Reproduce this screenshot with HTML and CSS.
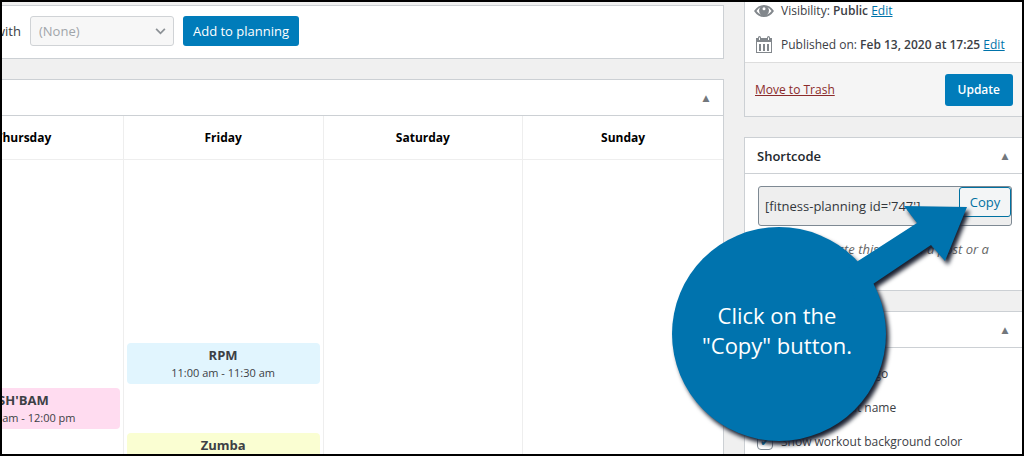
FILE: index.html
```
<!DOCTYPE html>
<html lang="en">

<head>
    <meta charset="utf-8">
    <meta name="viewport" content="width=device-width, initial-scale=1.0">
    <title>Edit planning</title>
    <link rel="stylesheet" href="styles.css">
</head>

<body>
    <main class="content">
        <section class="box add-workout">
            <label for="coach">with</label>
            <div class="select-wrap">
                <select id="coach" disabled>
                    <option>(None)</option>
                </select>
                <svg class="chevron" viewBox="0 0 12 8" aria-hidden="true"><path d="M1 1l5 5 5-5" /></svg>
            </div>
            <button type="button" class="button-primary">Add to planning</button>
        </section>

        <section class="box planning">
            <div class="box-header">
                <h2></h2>
                <button type="button" class="toggle" aria-label="Toggle planning">▲</button>
            </div>
            <table>
                <thead>
                    <tr>
                        <th>Thursday</th>
                        <th>Friday</th>
                        <th>Saturday</th>
                        <th>Sunday</th>
                    </tr>
                </thead>
                <tbody>
                    <tr><td></td><td></td><td></td><td></td></tr>
                    <tr><td></td><td></td><td></td><td></td></tr>
                    <tr><td></td><td></td><td></td><td></td></tr>
                    <tr><td></td><td></td><td></td><td></td></tr>
                    <tr>
                        <td></td>
                        <td><div class="workout blue"><b>RPM</b><span>11:00 am - 11:30 am</span></div></td>
                        <td></td>
                        <td></td>
                    </tr>
                    <tr>
                        <td><div class="workout pink"><b>SH'BAM</b><span>11:30 am - 12:00 pm</span></div></td>
                        <td></td>
                        <td></td>
                        <td></td>
                    </tr>
                    <tr>
                        <td></td>
                        <td><div class="workout yellow"><b>Zumba</b></div></td>
                        <td></td>
                        <td></td>
                    </tr>
                </tbody>
            </table>
        </section>
    </main>

    <aside class="sidebar">
        <section class="box publish">
            <p class="publish-row">
                <svg viewBox="0 0 20 20" aria-hidden="true">
                    <path fill-rule="evenodd" d="M0 10Q4 4 10 4T20 10Q16 16 10 16T0 10ZM2.500 10Q4.500 12.800 7 13.800Q5 12 5 9.500Q5 7.600 6.500 6.200Q4.200 7.500 2.500 10ZM17.500 10Q15.500 12.800 13 13.800Q15 12 15 9.500Q15 7.600 13.500 6.200Q15.800 7.500 17.500 10ZM10 6.200A1.500 1.500 0 0 0 10 9.200A1.500 1.500 0 0 0 10 6.200Z" />
                </svg>
                <span>Visibility: <b>Public</b> <a href="#">Edit</a></span>
            </p>
            <p class="publish-row">
                <svg viewBox="0 0 20 20" aria-hidden="true">
                    <path fill-rule="evenodd" d="M2 3H4V2.500Q4 1 5.500 1T7 2.500V3H13V2.500Q13 1 14.500 1T16 2.500V3H18V18H2ZM3 7V17H17V7ZM5 2.500V5H6V2.500ZM14 2.500V5H15V2.500Z" />
                    <path d="M5 9H7V16H5ZM9 9H11V16H9ZM13 9H15V16H13Z" />
                </svg>
                <span>Published on: <b>Feb 13, 2020 at 17:25</b> <a href="#">Edit</a></span>
            </p>
            <div class="publish-actions">
                <a class="trash" href="#">Move to Trash</a>
                <button type="button" class="button-primary">Update</button>
            </div>
        </section>

        <section class="box shortcode">
            <div class="box-header">
                <h2>Shortcode</h2>
                <button type="button" class="toggle" aria-label="Toggle shortcode">▲</button>
            </div>
            <div class="shortcode-body">
                <div class="shortcode-field">
                    <input type="text" value="[fitness-planning id='747']" aria-label="Shortcode" readonly>
                    <button type="button" class="copy">Copy</button>
                </div>
                <p>Copy and paste this code in a post or a page</p>
            </div>
        </section>

        <section class="box settings">
            <div class="box-header">
                <h2></h2>
                <button type="button" class="toggle" aria-label="Toggle settings">▲</button>
            </div>
            <div class="settings-body">
                <label><input type="checkbox" checked>Show workout logo</label>
                <label><input type="checkbox" checked>Show workout name</label>
                <label><input type="checkbox" checked>Show workout background color</label>
            </div>
        </section>
    </aside>

    <div class="callout">
        <svg viewBox="0 0 310 250" aria-hidden="true">
            <circle cx="114" cy="134" r="107" />
            <path d="M180 70L193 61L252 23L239 6L302 7L280 61L266 45L208 84L190 100Z" />
        </svg>
        <p>Click on the<br>"Copy" button.</p>
    </div>
</body>

</html>
```
FILE: styles.css
```
* {
    box-sizing: border-box;
}

body {
    display: grid;
    grid-template-columns: 1fr 278px;
    gap: 20px;
    height: 100vh;
    margin: 0;
    border: 2px solid #000;
    overflow: hidden;
    position: relative;
    background-color: #f0f0f0;
    color: #3c4045;
    font-family: "Open Sans", "Noto Sans", sans-serif;
    font-size: 12px;
    line-height: 18px;
}

h2,
p {
    margin: 0;
}

b {
    font-weight: 600;
}

a {
    color: #0073aa;
}

button,
input,
select {
    font-family: inherit;
    font-size: inherit;
}

.content,
.sidebar {
    display: flex;
    flex-direction: column;
    gap: 20px;
    min-width: 0;
    min-height: 0;
}

.content {
    overflow: hidden;
}

.box {
    flex-shrink: 0;
    background-color: #fff;
    border: 1px solid #ccd0d4;
}

.content .box {
    border-left: none;
}

.sidebar .box {
    border-right: none;
}

.box-header {
    display: flex;
    align-items: center;
    justify-content: space-between;
    height: 36px;
    padding: 0 9px 0 12px;
    border-bottom: 1px solid #ccd0d4;
}

.box-header h2 {
    color: #23282d;
    font-size: 13px;
    font-weight: 600;
}

.toggle {
    padding: 0;
    width: 16px;
    border: none;
    background: none;
    color: #72777c;
    font-family: "DejaVu Sans", sans-serif;
    font-size: 9px;
}

.button-primary {
    height: 30px;
    padding: 0 10px;
    border: none;
    border-radius: 3px;
    background-color: #007cba;
    color: #fff;
    font-size: 13px;
}

/* add workout */

.add-workout {
    display: flex;
    align-items: center;
    gap: 9px;
    height: 54px;
    margin-top: 3px;
    padding-bottom: 2px;
}

.add-workout label {
    margin-left: -7px;
    font-size: 13px;
}

.select-wrap {
    position: relative;
}

select {
    appearance: none;
    width: 144px;
    height: 30px;
    padding: 0 8px;
    border: 1px solid #d0d3d6;
    border-radius: 3px;
    background-color: #f7f7f7;
    color: #a0a5aa;
    font-size: 13px;
    opacity: 1;
}

.chevron {
    position: absolute;
    top: 12px;
    right: 8px;
    width: 11px;
    height: 7px;
    fill: none;
    stroke: #8c9196;
    stroke-width: 2;
}

/* planning, the first days of the week are out on the left */

table {
    width: calc(100% + 78px);
    margin-left: -78px;
    table-layout: fixed;
    border-collapse: separate;
    border-spacing: 0;
}

th {
    height: 44px;
    padding: 0;
    border-right: 1px solid #eee;
    border-bottom: 1px solid #eee;
    color: #000;
    font-size: 12px;
    font-weight: 700;
}

td {
    height: 45px;
    padding: 3px 3px 1px;
    border-right: 1px solid #eee;
}

th:last-child,
td:last-child {
    border-right: none;
}

.workout {
    display: flex;
    flex-direction: column;
    height: 41px;
    padding-top: 3px;
    border-radius: 4px;
    text-align: center;
    font-size: 11px;
}

.workout b {
    font-size: 13px;
    font-weight: 700;
}

.blue {
    background-color: #e1f5fe;
}

.pink {
    background-color: #ffdcf0;
}

.yellow {
    background-color: #fafed2;
}

/* publish */

.publish {
    border-top: none;
}

.publish-row {
    display: flex;
    align-items: center;
    gap: 7px;
    height: 34px;
    padding-left: 9px;
}

.publish-row:first-child {
    height: 26px;
    padding-bottom: 8px;
}

.publish-row svg {
    width: 20px;
    height: 20px;
    fill: #82878c;
}

.publish-actions {
    display: flex;
    align-items: center;
    justify-content: space-between;
    height: 54px;
    padding: 0 9px 0 10px;
    border-top: 1px solid #ddd;
    background-color: #f5f5f5;
}

.publish-actions .button-primary {
    height: 32px;
    padding: 0 13px;
    font-weight: 600;
    font-size: 12px;
}

.trash {
    color: #8b2b2b;
}

/* shortcode */

.shortcode-body {
    height: 116px;
    padding: 12px 10px 0 13px;
}

.shortcode-field {
    position: relative;
}

.shortcode-field input {
    display: block;
    width: 100%;
    height: 40px;
    padding: 0 6px;
    border: 1px solid #7e8993;
    border-radius: 3px;
    background-color: #eee;
    color: #32373c;
    font-size: 13px;
}

.copy {
    position: absolute;
    top: 1px;
    right: 1px;
    width: 52px;
    height: 30px;
    padding: 0;
    border: 1px solid #0071a1;
    border-radius: 3px;
    background-color: #f3f5f6;
    color: #0071a1;
    font-size: 13px;
}

.shortcode-body p {
    margin-top: 14px;
    padding-left: 8px;
    color: #666;
    font-size: 13px;
    font-style: italic;
}

/* settings */

.settings-body {
    display: flex;
    flex-direction: column;
    gap: 16px;
    padding: 17px 12px;
}

.settings-body label {
    display: flex;
    align-items: center;
    gap: 8px;
}

.settings-body input {
    appearance: none;
    display: grid;
    place-items: center;
    width: 16px;
    height: 16px;
    margin: 0;
    border: 1px solid #7e8993;
    border-radius: 4px;
}

.settings-body input:checked::before {
    content: "✔";
    color: #0073aa;
    font-size: 12px;
    line-height: 14px;
}

/* callout over the page, pointing at the copy button */

.callout {
    position: absolute;
    top: 198px;
    right: 47px;
    width: 310px;
    height: 250px;
}

.callout svg {
    display: block;
    width: 100%;
    height: 100%;
    overflow: visible;
    fill: #0073ae;
    filter: drop-shadow(3px 4px 2px #1a2030);
}

.callout p {
    position: absolute;
    top: 100px;
    left: 4px;
    width: 216px;
    color: #fff;
    font-size: 22px;
    line-height: 30px;
    text-align: center;
}
```
